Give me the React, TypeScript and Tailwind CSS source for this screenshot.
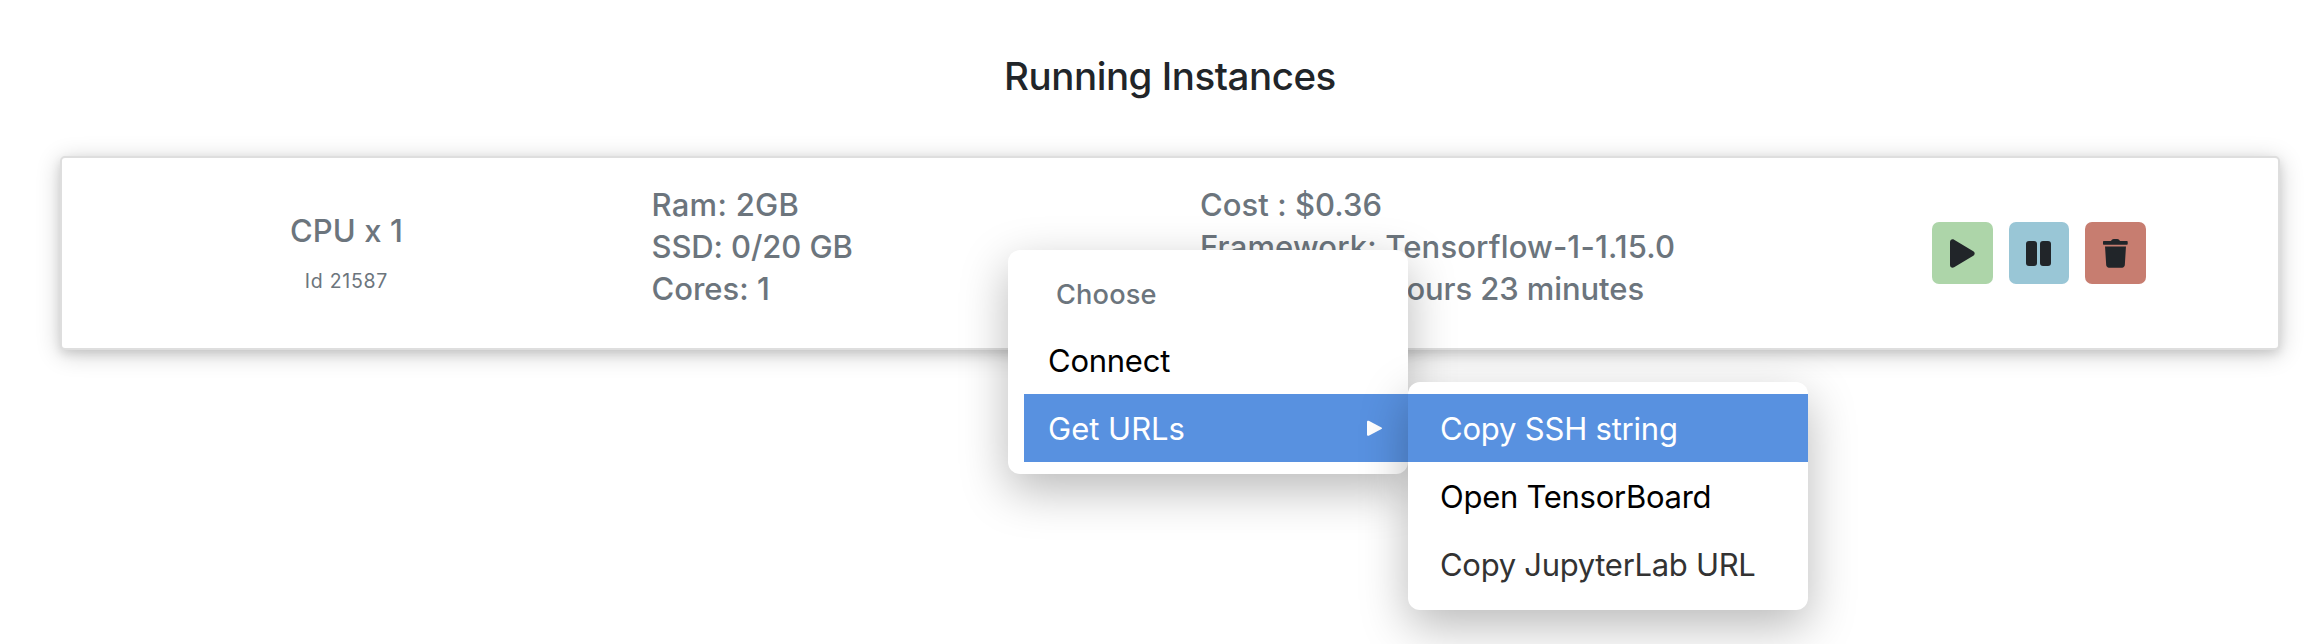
import React from 'react';

const specText = 'text-[31px] leading-[42px] font-medium whitespace-pre';

function InstanceName() {
  return (
    <div className="flex flex-col items-center pt-[52px] font-medium">
      <div className="text-[31px] leading-[42px] tracking-[0.1px]">CPU x 1</div>
      <div className="mt-[14px] text-[19.5px] leading-[30px] font-normal tracking-[0.73px]">Id 21587</div>
    </div>
  );
}

function Actions() {
  return (
    <div className="flex items-start justify-center gap-[16px] pt-[64px] pl-[91px] text-[#212529]">
      <button className="flex h-[62px] w-[61px] items-center justify-center rounded-[7px] bg-[#add5a9]">
        <svg width="61" height="62" viewBox="0 0 61 62" fill="currentColor">
          <path d="M18 20v23c0 2.300 2.200 3.500 4.100 2.300l19.200-11.600c1.800-1.100 1.800-3.300 0-4.400L22.100 17.700C20.200 16.500 18 17.700 18 20z" />
        </svg>
      </button>
      <button className="flex h-[62px] w-[60px] items-center justify-center rounded-[7px] bg-[#99c6d6]">
        <svg width="60" height="62" viewBox="0 0 60 62" fill="currentColor">
          <rect x="17" y="19" width="11" height="25" rx="3" />
          <rect x="31" y="19" width="11" height="25" rx="3" />
        </svg>
      </button>
      <button className="flex h-[62px] w-[61px] items-center justify-center rounded-[7px] bg-[#c77d70]">
        <svg width="61" height="62" viewBox="0 0 61 62" fill="currentColor">
          <path d="M18.700 19h7.300c.6-1.200 1.500-2 2.800-2h3.400c1.300 0 2.200.8 2.800 2h7c.4 0 .7.300.7.700v2.300c0 .4-.3.700-.7.700H18.700c-.4 0-.7-.3-.7-.7v-2.300c0-.4.3-.7.700-.7z" />
          <path d="M20 24.500h21l-1.200 18.600c-.1 1.500-1.200 2.600-2.700 2.600H23.900c-1.500 0-2.600-1.100-2.700-2.600z" />
        </svg>
      </button>
    </div>
  );
}

function InstanceCard() {
  return (
    <section className="mx-auto grid h-[194px] w-[2220px] grid-cols-4 rounded-[5px] border-2 border-[#dedede] bg-white px-[10px] text-[#6c757d] shadow-[0_4px_10px_rgba(0,0,0,0.1),0_4px_24px_rgba(0,0,0,0.2)]">
      <InstanceName />
      <div className={`${specText} pt-[26px] pl-[30.5px]`}>
        <div className="tracking-[0.28px]">Ram: 2GB</div>
        <div className="tracking-[-0.1px]">SSD: 0/20 GB</div>
        <div>Cores: 1</div>
      </div>
      <div className={`${specText} pt-[26px] pl-[30px]`}>
        <div className="tracking-[0.05px]">Cost : $0.36</div>
        <div className="tracking-[0.155px]">Framework: Tensorflow-1-1.15.0</div>
        <div className="flex w-[444px] justify-between tracking-[-0.09px]">
          <span>Uptime: 10</span>
          <span>hours 23 minutes</span>
        </div>
      </div>
      <Actions />
    </section>
  );
}

function Submenu() {
  return (
    <div className="absolute -top-[12px] left-full h-[228px] w-[400px] rounded-[12px] bg-white py-[12px] leading-[70px] text-black shadow-[0_16px_48px_rgba(0,0,0,0.28)]">
      <div className="h-[68px] bg-[#5891e0] pl-[32px] tracking-[-0.2px] text-white">Copy SSH string</div>
      <div className="h-[68px] pl-[32px] tracking-[-0.27px]">Open TensorBoard</div>
      <div className="h-[68px] pl-[32px] tracking-[-0.3px] text-[#333]">Copy JupyterLab URL</div>
    </div>
  );
}

function ContextMenu() {
  return (
    <div className="absolute top-[250px] left-[1008px] h-[224px] w-[400px] rounded-[12px] bg-white pt-[8px] text-[31px] text-black shadow-[0_16px_48px_rgba(0,0,0,0.28)]">
      <div className="h-[68px] pt-[8px] pl-[48px] text-[27.2px] leading-[58px] font-medium tracking-[0.14px] text-[#6c757d]">Choose</div>
      <div className="h-[68px] pl-[40px] leading-[70px] tracking-[-0.25px]">Connect</div>
      <div className="relative ml-[16px] flex h-[68px] items-center justify-between bg-[#5891e0] pr-[25px] pl-[24px] text-white">
        <span className="h-[68px] leading-[70px]">Get URLs</span>
        <svg width="17" height="18" viewBox="0 0 17 18" fill="currentColor">
          <path d="M1 2.900C1 1.900 1.900 1.400 2.700 1.800L15.500 8.400c.7.400.7 1.300 0 1.700L2.700 16.700C1.900 17.100 1 16.600 1 15.600z" />
        </svg>
        <Submenu />
      </div>
    </div>
  );
}

export default function App() {
  return (
    <main className="relative h-[644px] w-[2324px] overflow-hidden bg-white font-['Inter',sans-serif]">
      <div className="ml-[16px]">
        <h1 className="pt-[52px] pb-[56px] text-center text-[38.5px] leading-[48px] font-medium tracking-[-0.465px] text-[#212529]">
          Running Instances
        </h1>
        <InstanceCard />
      </div>
      <ContextMenu />
    </main>
  );
}
